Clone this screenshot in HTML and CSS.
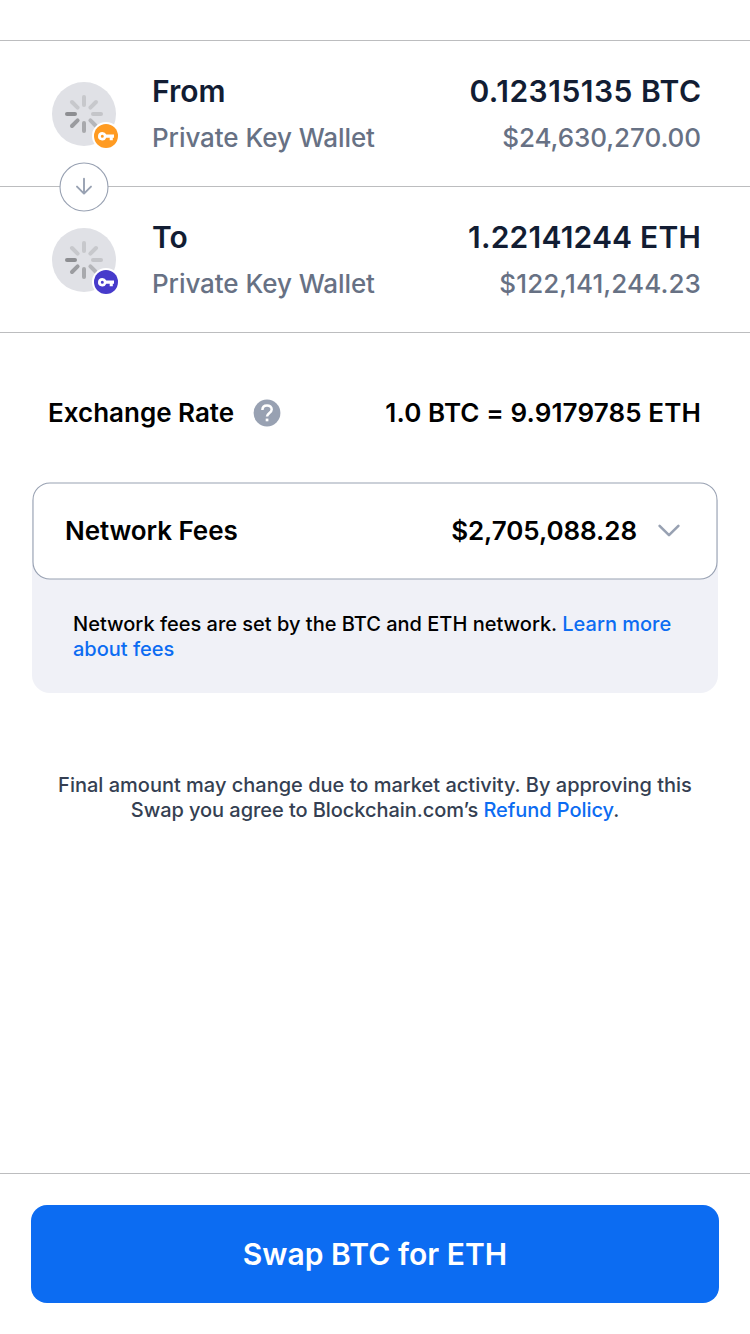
FILE: index.html
```html
<!DOCTYPE html>
<html lang="en">
<head>
<meta charset="utf-8">
<title>Swap BTC for ETH</title>
<link rel="stylesheet" href="styles.css">
</head>
<body>
<svg class="defs" width="0" height="0" aria-hidden="true">
  <symbol id="spinner" viewBox="-32 -32 64 64">
    <circle r="32" fill="#e0e1e6"/>
    <g stroke-width="4" stroke-linecap="round">
      <path d="M0-9V-17" stroke="#c7c8cc"/>
      <path d="M6.4-6.4L12-12" stroke="#c7c8cc"/>
      <path d="M9 0H17" stroke="#c4c5c9"/>
      <path d="M6.4 6.4L12 12" stroke="#b5b6ba"/>
      <path d="M0 9V17" stroke="#a8a9ad"/>
      <path d="M-6.4 6.4L-12 12" stroke="#9b9ca0"/>
      <path d="M-9 0H-17" stroke="#8d8e92"/>
      <path d="M-6.4-6.4L-12-12" stroke="#c7c8cc"/>
    </g>
  </symbol>
  <symbol id="key" viewBox="0 0 28 28">
    <circle cx="14" cy="14" r="14" fill="#fff"/>
    <circle cx="14" cy="14" r="12" fill="currentColor"/>
    <path fill="#fff" fill-rule="evenodd" d="M10.3 9.9a4.3 4.3 0 0 1 4 2.7h7.7v3.2h-1.2v2.4h-3.1v-2.4h-3.4a4.3 4.3 0 1 1-4-5.9zm0 2.8a1.5 1.5 0 1 0 0 3a1.5 1.5 0 0 0 0-3z"/>
  </symbol>
</svg>
<div class="screen">
  <header class="top"></header>
  <section class="leg">
    <div class="coin">
      <svg class="spinner"><use href="#spinner"/></svg>
      <svg class="badge btc"><use href="#key"/></svg>
    </div>
    <div class="side">
      <div class="title">From</div>
      <div class="sub">Private Key Wallet</div>
    </div>
    <div class="side amount">
      <div class="title from-amount">0.12315135 BTC</div>
      <div class="sub">$24,630,270.00</div>
    </div>
    <svg class="direction" viewBox="0 0 50 50" fill="none" stroke="#98a1b2">
      <circle cx="25" cy="25" r="24" fill="#fff" stroke-width="1.1"/>
      <path d="M25 16.8V31.2M18 24.6l7 7 7-7" stroke-width="1.9" stroke-linecap="round" stroke-linejoin="round"/>
    </svg>
  </section>
  <section class="leg">
    <div class="coin">
      <svg class="spinner"><use href="#spinner"/></svg>
      <svg class="badge eth"><use href="#key"/></svg>
    </div>
    <div class="side">
      <div class="title">To</div>
      <div class="sub">Private Key Wallet</div>
    </div>
    <div class="side amount">
      <div class="title to-amount">1.22141244 ETH</div>
      <div class="sub to-usd">$122,141,244.23</div>
    </div>
  </section>
  <section class="rate">
    <span class="rate-label">Exchange Rate</span>
    <svg class="help" viewBox="0 0 28 28">
      <circle cx="14" cy="14" r="13.4" fill="#98a1b2"/>
      <path d="M9.4 11c0-2.9 1.9-4.6 4.6-4.6s4.7 1.7 4.7 4.1c0 3.4-4.7 3.5-4.7 7.1" fill="none" stroke="#fff" stroke-width="2.5"/>
      <rect x="12.7" y="19.6" width="2.7" height="2.7" fill="#fff"/>
    </svg>
    <span class="rate-value">1.0 BTC = 9.9179785 ETH</span>
  </section>
  <section class="fees">
    <div class="fees-card">
      <svg class="frame" viewBox="0 0 686 98"><path d="M0 18V0H686V18Z" fill="#fff"/><rect x="1" y="1" width="684" height="96" rx="17" fill="#fff" stroke="#98a1b2" stroke-width="1.1"/></svg>
      <span class="fees-label">Network Fees</span>
      <span class="fees-value">$2,705,088.28</span>
      <svg class="chevron" viewBox="0 0 24 16" fill="none" stroke="#98a1b2" stroke-width="2.6" stroke-linecap="round" stroke-linejoin="round"><path d="M2.6 2.9L12 12.2L21.4 2.9"/></svg>
    </div>
    <p class="fees-note">Network fees are set by the BTC and ETH network. <a>Learn more<br>about fees</a></p>
  </section>
  <p class="legal">Final amount may change due to market activity. By approving this<br><span class="legal-end">Swap you agree to Blockchain.com’s <a>Refund Policy</a>.</span></p>
  <footer class="bottom"><button class="swap">Swap BTC for ETH</button></footer>
</div>
</body>
</html>
```
FILE: styles.css
```css
* { box-sizing: border-box; }
body { margin: 0; background: #fff; font-family: Inter, sans-serif; }
.defs { position: absolute; }
.screen { display: flex; flex-direction: column; height: 1334px; color: #000; }
.top { height: 41px; border-bottom: 1px solid #bcbdbf; }
.leg { position: relative; display: flex; height: 146px; padding: 30px 49px 0 52px; border-bottom: 1px solid #bcbdbf; }
.coin { position: relative; width: 64px; height: 64px; margin: 11px 36px 0 0; }
.spinner { display: block; width: 64px; height: 64px; }
.badge { position: absolute; left: 40px; top: 40px; width: 28px; height: 28px; }
.btc { color: #ff9b22; }
.eth { color: #473bcb; }
.direction { position: absolute; z-index: 1; left: 59px; top: 121px; width: 50px; height: 50px; }
.side { display: flex; flex-direction: column; white-space: nowrap; }
.amount { margin-left: auto; align-items: flex-end; }
.title { font-size: 30px; line-height: 40px; font-weight: 600; color: #121d33; }
.from-amount { letter-spacing: 0.5px; margin-right: -0.5px; }
.to-amount { letter-spacing: 0.2px; }
.sub { margin-top: 8px; font-size: 26px; line-height: 38px; font-weight: 500; letter-spacing: -0.07px; color: #677184; }
.to-usd { letter-spacing: 0.1px; }
.rate { display: flex; align-items: center; height: 40px; margin: 60px 49px 0 48px; font-size: 26px; font-weight: 600; white-space: nowrap; }
.rate-label, .rate-value { padding-bottom: 2px; }
.help { width: 28px; height: 28px; margin-left: 19px; }
.rate-value { margin-left: auto; letter-spacing: 0.12px; }
.fees { margin: 49px 32px 0; height: 211px; border-radius: 18px; background: #f0f1f7; }
.fees-card { position: relative; z-index: 0; display: flex; align-items: center; height: 98px; padding: 0 37px 0 33px; font-size: 26px; font-weight: 600; letter-spacing: -0.08px; }
.frame { position: absolute; z-index: -1; inset: 0; width: 100%; height: 100%; }
.fees-label, .fees-value { padding-bottom: 2px; }
.fees-value { margin-left: auto; }
.chevron { width: 24px; height: 16px; margin-left: 20px; }
.fees-note { margin: 32px 0 0 41px; font-size: 20px; line-height: 25px; font-weight: 500; white-space: nowrap; }
.legal { margin: 80px 0 0; text-align: center; font-size: 20px; line-height: 25px; font-weight: 500; color: #353f52; white-space: nowrap; }
.legal-end { letter-spacing: -0.06px; }
a { color: #0c6cf2; }
.bottom { margin-top: auto; height: 161px; padding: 31px 31px 0; border-top: 1px solid #bcbdbf; }
.swap { display: block; width: 100%; height: 98px; padding: 0; border: 0; border-radius: 16px; background: #0c6cf2; color: #fff; font: 600 30px Inter, sans-serif; letter-spacing: 0.05px; }
```
